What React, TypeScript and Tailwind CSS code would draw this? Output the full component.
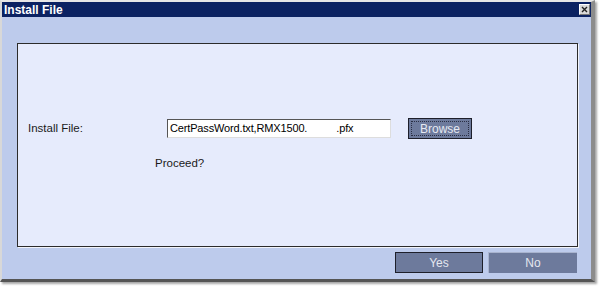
export default function App() {
  return (
    <div className="w-[599px] h-[286px] bg-white font-['Liberation_Sans',Arial,sans-serif]">
      <div className="w-[595px] h-[282px] flex flex-col border-t-2 border-l-2 border-r-[4px] border-b-[3px] border-t-[#e6e6e6] border-l-[#d8d8d8] border-r-[#8c8c8c] border-b-[#555] shadow-[2px_2px_2px_rgba(0,0,0,0.35)]">
        {/* title bar */}
        <div className="h-[15px] bg-[#0b2262] flex items-center justify-between pl-[2px] pr-[1px]">
          <span className="text-white font-bold text-[12px] leading-none">Install File</span>
          <div className="w-[11px] h-[11px] bg-[#d9d9d9] border border-t-white border-l-white border-r-[#777] border-b-[#777] flex items-center justify-center">
            <svg width="7" height="7" viewBox="0 0 7 7">
              <path d="M1 1 L6 6 M6 1 L1 6" stroke="#222" strokeWidth="1.4" />
            </svg>
          </div>
        </div>

        {/* body */}
        <div className="flex-1 bg-[#bdcbec] pl-[15px] pt-[26px]">
          <div className="w-[561px] h-[204px] bg-[#e6ebfc] border border-[#2b2b2b] shadow-[1px_1px_0_#f2f4fb]">
            <div className="flex items-center mt-[74px]">
              <span className="w-[149px] pl-[10px] text-[11.5px] text-[#1a1a1a]">Install File:</span>
              <div className="w-[224px] h-[19px] bg-white border border-t-[#555] border-l-[#555] border-r-[#ddd] border-b-[#ddd] flex items-center pl-[2px]">
                <span className="text-[11px] text-black whitespace-pre tracking-[-0.15px]">CertPassWord.txt,RMX1500.          .pfx</span>
              </div>
              <button className="ml-[17px] w-[64px] h-[21px] bg-[#6d7a9c] border border-[#1d1f2a] p-[2px]">
                <div className="w-full h-full border border-dotted border-[#2a2f44] flex items-center justify-center text-[12px] text-[#e6e9f2]">Browse</div>
              </button>
            </div>
            <div className="ml-[137px] mt-[16px] text-[11.5px] text-[#1a1a1a]">Proceed?</div>
          </div>
          <div className="flex gap-[5px] mt-[5px] ml-[378px]">
            <button className="w-[88px] h-[21px] bg-[#6d7a9c] border border-[#1d1f2a] text-[12px] text-[#e4e7f0] flex items-center justify-center">Yes</button>
            <button className="w-[89px] h-[21px] bg-[#6d7a9c] border-t border-l border-[#a9b4cf] text-[12px] text-[#e4e7f0] flex items-center justify-center">No</button>
          </div>
        </div>
      </div>
    </div>
  );
}
